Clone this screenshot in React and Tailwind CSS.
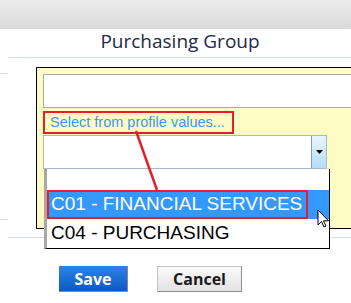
import React from "react";

const App = () => {
  return (
    <div className="relative w-[351px] h-[303px] overflow-hidden bg-white">
      {/* top bar */}
      <div className="h-[29px] bg-gradient-to-b from-[#ececec] to-[#dadada]" />

      {/* title */}
      <div className="h-[28px] flex justify-center pl-[9px]">
        <h2 className="font-['Open_Sans',sans-serif] text-[19px] leading-[24px] text-[#1c2a48]">
          Purchasing Group
        </h2>
      </div>

      <div className="flex h-px">
        <div className="w-[8px]" />
        <div className="w-[20px] bg-[#d3dbe6]" />
        <div className="w-px" />
        <div className="flex-1 bg-[#d3dbe6]" />
      </div>

      <div className="flex">
        <div className="w-[36px] shrink-0 flex flex-col">
          <div className="mt-[15px] h-px w-[8px] bg-[#d3dbe6]" />
          <div className="mt-[145px] h-px w-[8px] bg-[#d3dbe6]" />
        </div>

        <div className="relative mt-[9px] w-[330px] shrink-0 h-[162px] border border-black bg-[#fffbc4] p-[6px]">
          <div className="h-[34px] w-[320px] border border-[#a9a9a9] bg-white" />

          <div className="mt-[3px] inline-flex h-[23px] items-center border-2 border-[#e61e28] pl-[5px] pr-[7px]">
            <span className="font-['Liberation_Sans',Arial,sans-serif] text-[14.5px] text-[#3a98f0]">
              Select from profile values...
            </span>
          </div>

          <div className="mt-px flex h-[34px] w-[284px] border border-[#a7b8ca] bg-white">
            <div className="flex-1" />
            <div className="flex w-[15px] items-center justify-center border-l border-[#7f9dbd] bg-gradient-to-b from-[#eaf5fd] to-[#b4dcf6]">
              <svg width="7" height="4" viewBox="0 0 7 4">
                <path d="M0 0h7L3.5 4z" fill="#000" />
              </svg>
            </div>
          </div>

          {/* open list */}
          <div className="absolute left-[7px] top-[101px] z-10 w-[286px] h-[80px] border-l-[3px] border-l-[#a8a8a8] border-r border-b border-black bg-white font-['Liberation_Sans',Arial,sans-serif] text-[19px]">
            <div className="h-[21px]" />
            <div className="h-[29px] bg-[#3399ff]">
              <div className="inline-flex h-[29px] items-center border-2 border-[#e61e28] pl-[2px] pr-[4px] text-white">
                C01 - FINANCIAL SERVICES
              </div>
            </div>
            <div className="flex h-[28px] items-center pl-[4px] text-black">
              C04 - PURCHASING
            </div>
          </div>
        </div>
      </div>

      <div className="mt-[8px] flex h-px">
        <div className="w-[8px]" />
        <div className="w-[20px] bg-[#d3dbe6]" />
        <div className="w-px" />
        <div className="flex-1 bg-[#d3dbe6]" />
      </div>

      <div className="mt-[28px] flex gap-[29px] pl-[59px] font-['Open_Sans',sans-serif] text-[16px] font-bold">
        <button className="h-[26px] w-[69px] border-r border-b border-[#8a8a8a] bg-gradient-to-b from-[#2f82e4] to-[#0a5ac2] text-white leading-none">
          Save
        </button>
        <button className="h-[26px] w-[85px] border border-[#c4c4c4] border-r-[#8c8c8c] border-b-[#8c8c8c] bg-gradient-to-b from-[#fafafa] to-[#e2e2e2] text-[#1a1a1a] leading-none">
          Cancel
        </button>
      </div>

      {/* annotation line */}
      <svg className="absolute left-0 top-0 z-20 pointer-events-none" width="351" height="303">
        <line x1="136" y1="131" x2="157" y2="190" stroke="#e61e28" strokeWidth="2.5" />
      </svg>

      {/* mouse cursor */}
      <svg className="absolute left-[317px] top-[209px] z-30" width="13" height="19" viewBox="0 0 13 19">
        <path d="M1 1v15l3.5-3.5 2.5 5.5 2-1-2.5-5.2H11.5z" fill="#fff" stroke="#000" strokeWidth="1" strokeLinejoin="round" />
      </svg>
    </div>
  );
};

export default App;
